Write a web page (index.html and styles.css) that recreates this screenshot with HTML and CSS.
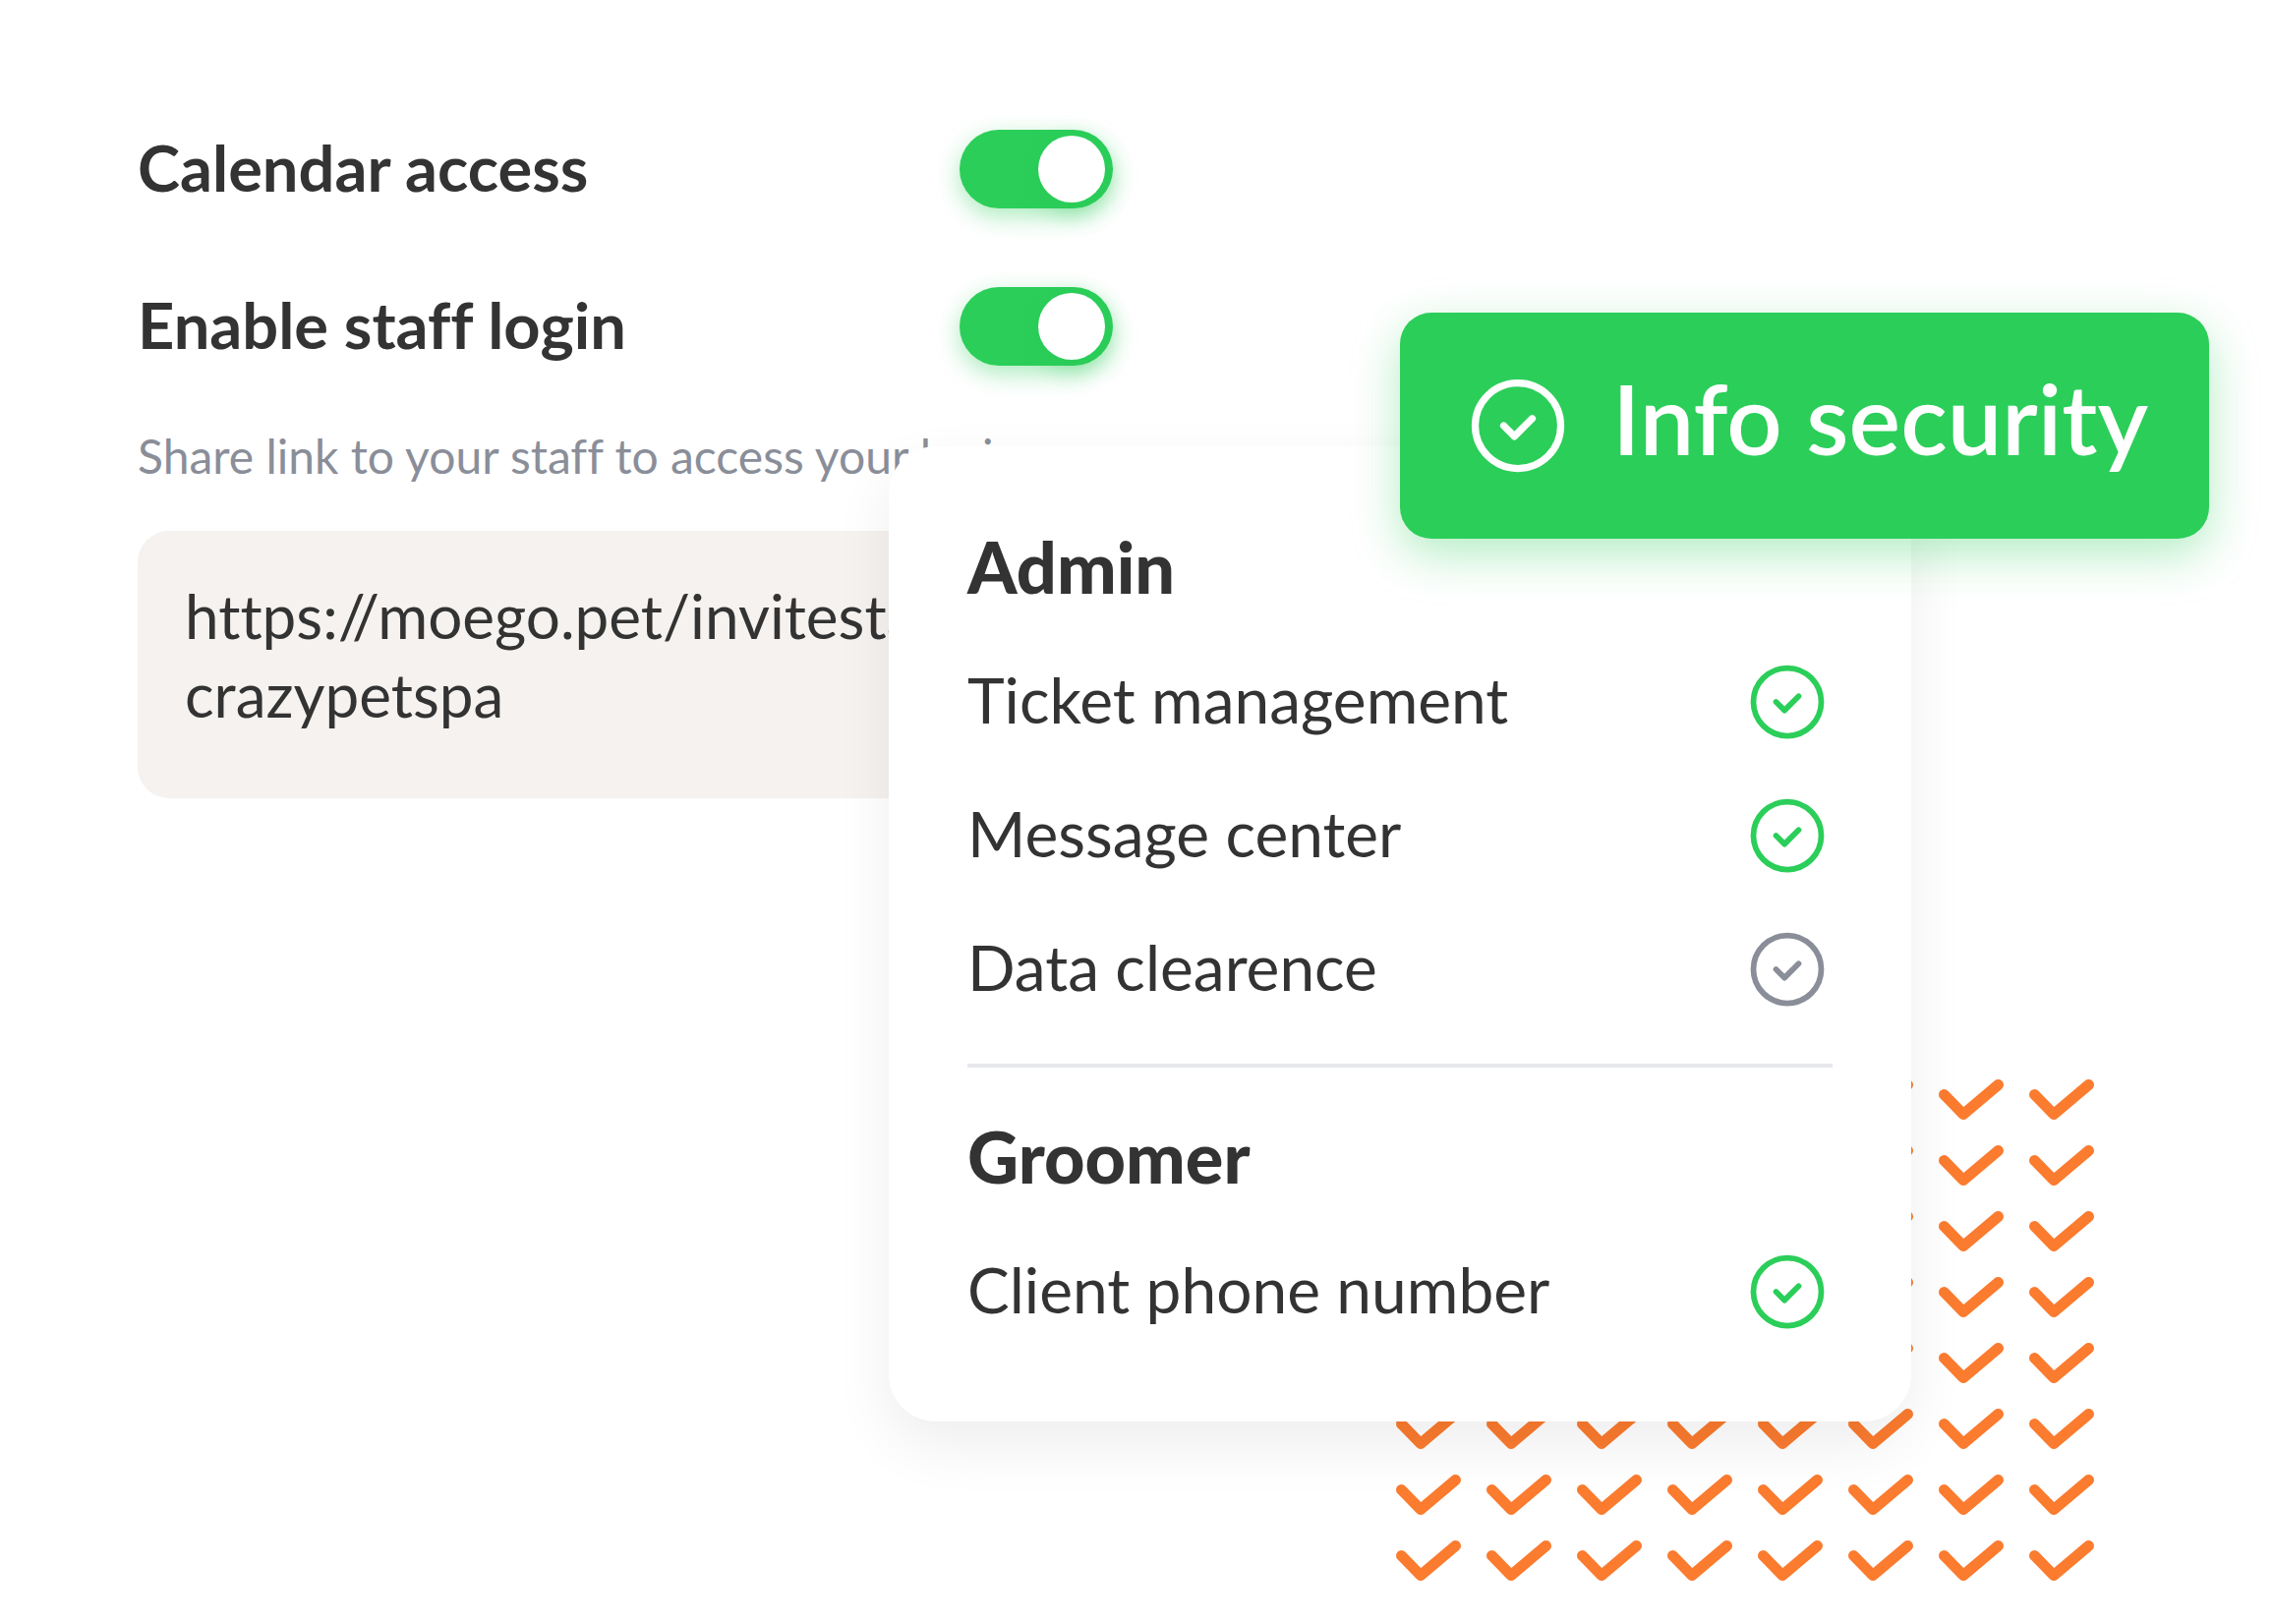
FILE: index.html
```html
<!DOCTYPE html>
<html lang="en">

<head>
    <meta charset="UTF-8">
    <meta name="viewport" content="width=device-width, initial-scale=1.0">
    <title>Staff permissions</title>
    <link rel="stylesheet" href="styles.css">
</head>

<body>

    <!-- shared check icon -->
    <svg class="sprite" aria-hidden="true">
        <symbol id="check" viewBox="0 0 24 24">
            <circle cx="12" cy="12" r="9" />
            <path d="M9 12l2.25 2.25L15 10.5" />
        </symbol>
    </svg>

    <main class="scene">
        <section class="settings">
            <div class="setting">
                <label for="calendar">Calendar access</label>
                <input type="checkbox" class="switch" id="calendar" checked>
            </div>
            <div class="setting">
                <label for="login">Enable staff login</label>
                <input type="checkbox" class="switch" id="login" checked>
            </div>
            <p class="hint">Share link to your staff to access your login</p>
            <div class="link-box">
                <a href="#">https://moego.pet/invitestaff/<br>crazypetspa</a>
            </div>
        </section>

        <svg class="pattern" aria-hidden="true">
            <defs>
                <pattern id="ticks" width="92" height="67" patternUnits="userSpaceOnUse">
                    <path d="M5.5 15.5L25 35.5L60.5 5.5" />
                </pattern>
            </defs>
            <rect width="100%" height="100%" fill="url(#ticks)" />
        </svg>

        <section class="card">
            <h2>Admin</h2>
            <ul>
                <li><span>Ticket management</span> <svg class="icon"><use href="#check" /></svg></li>
                <li><span>Message center</span> <svg class="icon"><use href="#check" /></svg></li>
                <li><span>Data clearence</span> <svg class="icon off"><use href="#check" /></svg></li>
            </ul>
            <hr>
            <h2>Groomer</h2>
            <ul>
                <li><span>Client phone number</span> <svg class="icon"><use href="#check" /></svg></li>
            </ul>
        </section>

        <div class="badge">
            <svg class="icon"><use href="#check" /></svg>
            <span>Info security</span>
        </div>
    </main>

</body>

</html>
```

FILE: styles.css
```css
* {
    box-sizing: border-box;
}

body {
    margin: 0;
    background: #fff;
    color: #333;
    font-family: Lato, sans-serif;
    font-size: 64px;
    font-variant-ligatures: none;
    line-height: 80px;
}

.sprite {
    display: none;
}

.scene {
    position: relative;
    min-height: 100vh;
    padding: 132px 140px;
    overflow: hidden;
}

/* left side */
.settings {
    width: 992px;
    max-width: 100%;
}

.setting {
    display: flex;
    align-items: center;
    justify-content: space-between;
    height: 80px;
    margin-bottom: 80px;
    font-size: 65px;
    font-weight: bold;
}

.setting label,
.card li span {
    padding-bottom: 4px;
}

.switch {
    appearance: none;
    display: flex;
    align-items: center;
    justify-content: flex-end;
    width: 156px;
    height: 80px;
    margin: 0;
    padding: 0 8px;
    border-radius: 40px;
    background: #2bce59;
    box-shadow: 0 8px 24px rgba(43, 206, 89, 0.4);
    cursor: pointer;
}

.switch::before {
    content: "";
    width: 68px;
    height: 68px;
    border-radius: 50%;
    background: #fff;
    box-shadow: 0 8px 24px rgba(39, 200, 86, 0.4);
}

.switch:not(:checked) {
    justify-content: flex-start;
    background: #8a8e99;
}

.hint {
    margin: -16px 0 48px;
    color: #8a8e99;
    font-size: 48px;
    line-height: 56px;
    white-space: nowrap;
}

.link-box {
    padding: 46px 48px 66px;
    border-radius: 32px;
    background: #f5f2ef;
    font-size: 62px;
}

.link-box a {
    color: inherit;
    text-decoration: none;
}

/* orange ticks behind the card */
.pattern {
    position: absolute;
    top: 1098px;
    left: 1420px;
    width: 710px;
    height: 510px;
}

.pattern path {
    fill: none;
    stroke: #fb7b2f;
    stroke-width: 11;
    stroke-linecap: round;
    stroke-linejoin: round;
}

/* permissions card */
.card {
    position: absolute;
    top: 454px;
    left: 904px;
    width: 45%;
    padding: 82px 80px 86px;
    border-radius: 48px;
    background: #fff;
    box-shadow: 0 24px 60px rgba(0, 0, 0, 0.07);
}

.card h2 {
    margin: 0 0 52px;
    font-size: 72px;
    font-weight: 900;
    line-height: 80px;
}

.card ul {
    display: grid;
    gap: 44px;
    margin: 0;
    padding: 0;
    list-style: none;
}

.card li {
    display: flex;
    align-items: center;
    justify-content: space-between;
}

.card hr {
    height: 4px;
    margin: 50px 0;
    border: 0;
    background: #e6e8ec;
}

.icon {
    width: 92px;
    height: 92px;
    fill: none;
    stroke: #2bce59;
    stroke-width: 1.5;
    stroke-linecap: round;
    stroke-linejoin: round;
}

.icon.off {
    stroke: #8a8e99;
}

/* green badge */
.badge {
    position: absolute;
    top: 318px;
    left: 1424px;
    display: flex;
    align-items: center;
    gap: 38px;
    height: 230px;
    padding: 0 62px;
    border-radius: 32px;
    background: #2bce59;
    box-shadow: 0 16px 48px rgba(43, 206, 89, 0.36);
    color: #fff;
    font-size: 99px;
    font-weight: 600;
    white-space: nowrap;
}

.badge span {
    padding-bottom: 16px;
}

.badge .icon {
    width: 116px;
    height: 116px;
    stroke: #fff;
}
```
